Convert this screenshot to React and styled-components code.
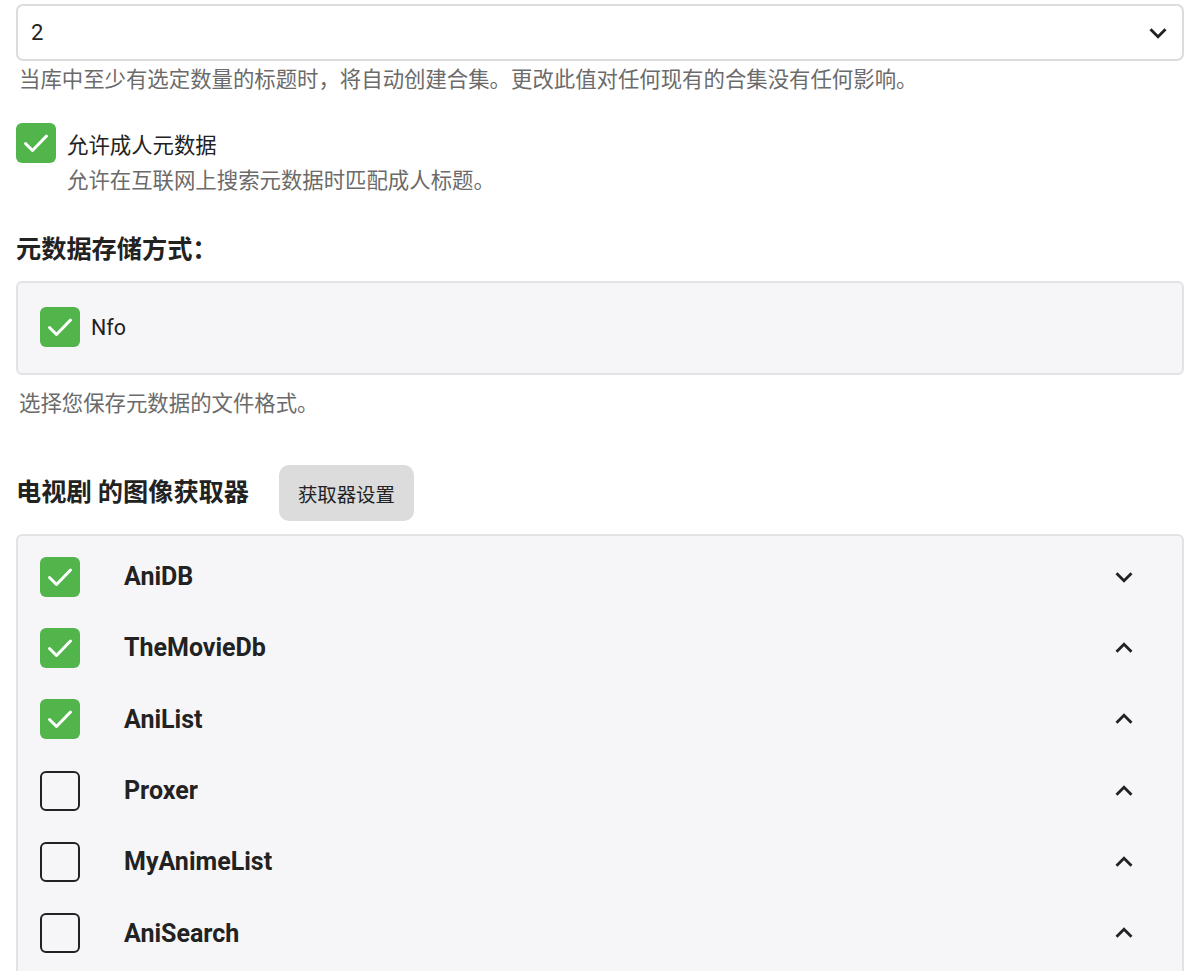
import React from "react";
import styled, { createGlobalStyle } from "styled-components";
import { MdKeyboardArrowDown, MdKeyboardArrowUp } from "react-icons/md";

const GlobalStyle = createGlobalStyle`
    body {
        margin: 0;
        background: #fff;
        font-family: Roboto, "Noto Sans", "Noto Sans CJK SC", sans-serif;
        color: #222;
    }
`;

const Page = styled.div`
    padding: 4px 18px 0 16px;
    width: 1168px;
`;

const SelectBox = styled.div`
    display: flex;
    align-items: center;
    justify-content: space-between;
    height: 53px;
    border: 2px solid #dcdcdc;
    border-radius: 7px;
    padding: 0 7px 0 13px;
    font-size: 22px;
    background: #fff;
`;

const Desc = styled.div`
    font-size: 21.4px;
    color: #6b6b6b;
    line-height: 28px;
    margin: ${(props) => props.margin || "5px 0 0 3px"};
`;

const CheckRow = styled.label`
    display: flex;
    align-items: center;
    gap: 11px;
    font-size: 21.4px;
    color: #222;
`;

const Box = styled.span`
    flex: none;
    width: 40px;
    height: 40px;
    box-sizing: border-box;
    border-radius: 6px;
    display: flex;
    align-items: center;
    justify-content: center;
    background: ${(props) => (props.checked ? "#52b54b" : "transparent")};
    border: ${(props) => (props.checked ? "none" : "2.5px solid #222")};
`;

const Heading = styled.h3`
    margin: 0;
    font-size: 25.2px;
    line-height: 30px;
    font-weight: 700;
    color: #222;
`;

const Panel = styled.div`
    background: #f6f6f8;
    border: 2px solid #e3e3e5;
    border-radius: 6px;
    padding: ${(props) => props.padding || "0"};
`;

const Section = styled.div`
    margin-top: ${(props) => props.top || 0}px;
`;

const HeadingRow = styled.div`
    display: flex;
    align-items: center;
    gap: 30px;
    margin: ${(props) => props.margin || "0"};
`;

const Button = styled.button`
    border: none;
    background: #dcdcdc;
    border-radius: 10px;
    height: 56px;
    padding: 0 19px;
    font-size: 19.4px;
    font-family: inherit;
    color: #222;
`;

const ItemRow = styled.div`
    display: flex;
    align-items: center;
    height: 71.3px;
    padding: 0 41px 0 22px;
`;

const ItemName = styled.div`
    flex: 1;
    margin-left: 44px;
    font-size: 25px;
    font-weight: 700;
    color: #222;
`;

const Chevron = styled.span`
    display: flex;
    color: #222;
`;

const Check = () => (
    <svg width="40" height="40" viewBox="0 0 40 40">
        <path d="M9.5 20.5 L16.5 27.5 L30.5 13" fill="none" stroke="#fff" strokeWidth="3" strokeLinecap="round" strokeLinejoin="round" />
    </svg>
);

const fetchers = [
    { name: "AniDB", checked: true, open: false },
    { name: "TheMovieDb", checked: true, open: true },
    { name: "AniList", checked: true, open: true },
    { name: "Proxer", checked: false, open: true },
    { name: "MyAnimeList", checked: false, open: true },
    { name: "AniSearch", checked: false, open: true },
];

const App = () => {
    return (
        <Page>
            <GlobalStyle />
            <SelectBox>
                <span>2</span>
                <MdKeyboardArrowDown size={34} />
            </SelectBox>
            <Desc>当库中至少有选定数量的标题时，将自动创建合集。更改此值对任何现有的合集没有任何影响。</Desc>

            <Section top={29}>
                <CheckRow>
                    <Box checked><Check /></Box>
                    允许成人元数据
                </CheckRow>
                <Desc margin="4px 0 0 51px">允许在互联网上搜索元数据时匹配成人标题。</Desc>
            </Section>

            <HeadingRow margin="40px 0 16px 0">
                <Heading>元数据存储方式：</Heading>
            </HeadingRow>
            <Panel padding="24px 22px 26px">
                <CheckRow>
                    <Box checked><Check /></Box>
                    Nfo
                </CheckRow>
            </Panel>
            <Desc margin="15px 0 0 3px">选择您保存元数据的文件格式。</Desc>

            <HeadingRow margin="47px 0 13px 0">
                <Heading>电视剧 的图像获取器</Heading>
                <Button>获取器设置</Button>
            </HeadingRow>
            <Panel padding="5px 0 20px">
                {fetchers.map((item, i) => (
                    <ItemRow key={i}>
                        <Box checked={item.checked}>{item.checked && <Check />}</Box>
                        <ItemName>{item.name}</ItemName>
                        <Chevron>
                            {item.open ? <MdKeyboardArrowUp size={34} /> : <MdKeyboardArrowDown size={34} />}
                        </Chevron>
                    </ItemRow>
                ))}
            </Panel>
        </Page>
    );
};

export default App;
